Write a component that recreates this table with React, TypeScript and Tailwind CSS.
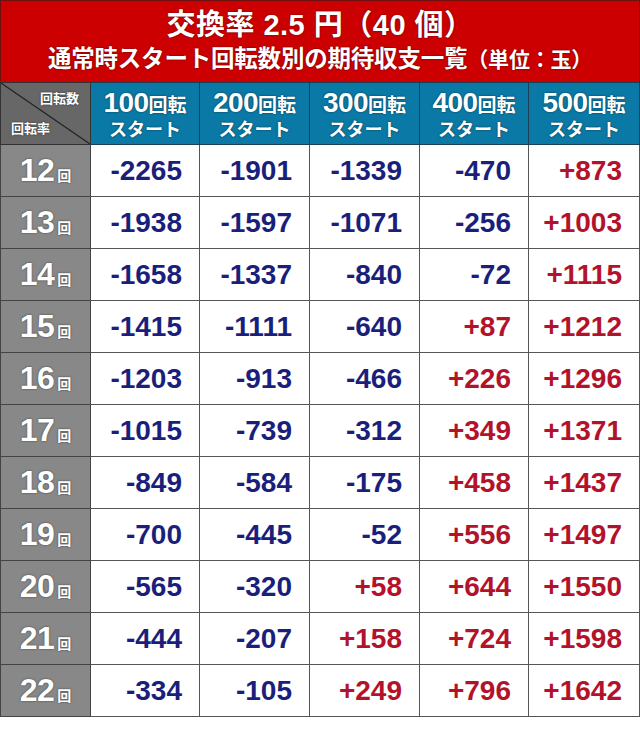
import React from 'react';

const cols = [100, 200, 300, 400, 500];

const rows: { rate: number; vals: number[] }[] = [
  { rate: 12, vals: [-2265, -1901, -1339, -470, 873] },
  { rate: 13, vals: [-1938, -1597, -1071, -256, 1003] },
  { rate: 14, vals: [-1658, -1337, -840, -72, 1115] },
  { rate: 15, vals: [-1415, -1111, -640, 87, 1212] },
  { rate: 16, vals: [-1203, -913, -466, 226, 1296] },
  { rate: 17, vals: [-1015, -739, -312, 349, 1371] },
  { rate: 18, vals: [-849, -584, -175, 458, 1437] },
  { rate: 19, vals: [-700, -445, -52, 556, 1497] },
  { rate: 20, vals: [-565, -320, 58, 644, 1550] },
  { rate: 21, vals: [-444, -207, 158, 724, 1598] },
  { rate: 22, vals: [-334, -105, 249, 796, 1642] },
];

const font = { fontFamily: '"Liberation Sans", "Noto Sans CJK JP", sans-serif' };
const outline = '[text-shadow:0_0_2px_rgba(0,0,0,0.6)]';

export default function App() {
  return (
    <div className="w-[640px] h-[731px] bg-white font-bold" style={font}>
      {/* title */}
      <div className="h-[82px] bg-[#cc0000] border-t border-x border-[#6e1010] flex flex-col items-center text-white [text-shadow:0_0_2px_rgba(0,0,0,0.6)]">
        <div className="text-[29px] leading-none mt-[10px] tracking-[0.5px]">
          交換率 2.5 円（40 個）
        </div>
        <div className="text-[23.5px] leading-none mt-[8px] tracking-[-0.2px]">
          通常時スタート回転数別の期待収支一覧<span className="text-[21px]">（単位：玉）</span>
        </div>
      </div>

      <div className="grid grid-cols-[91px_109px_110px_110px_109px_111px]">
        {/* corner */}
        <div className="relative h-[63px] bg-[#676767] border-y border-l border-r border-[#333] text-white text-[13px] leading-none">
          <svg className="absolute inset-0" width="100%" height="100%" preserveAspectRatio="none" viewBox="0 0 100 100">
            <line x1="0" y1="0" x2="100" y2="100" stroke="#222" strokeWidth="1.2" vectorEffect="non-scaling-stroke" />
          </svg>
          <div className={`absolute right-[11px] top-[9px] ${outline}`}>回転数</div>
          <div className={`absolute left-[10px] bottom-[9px] ${outline}`}>回転率</div>
        </div>
        {cols.map((c) => (
          <div
            key={c}
            className={`h-[63px] bg-[#0a79a5] border-y border-r border-[#1b3f55] flex flex-col items-center justify-center text-white leading-none ${outline}`}
          >
            <div className="flex items-baseline">
              <span className="text-[28px] tracking-[-0.5px]">{c}</span>
              <span className="text-[19px]">回転</span>
            </div>
            <div className="text-[18px] mt-[4px]">スタート</div>
          </div>
        ))}

        {rows.map((r) => (
          <React.Fragment key={r.rate}>
            <div
              className={`h-[52px] bg-[#888888] border-l border-r border-b border-[#444] flex items-baseline justify-center pt-[9px] text-white ${outline}`}
            >
              <span className="text-[32px] leading-none tracking-[-0.5px]">{r.rate}</span>
              <span className="text-[14px] leading-none ml-[3px]">回</span>
            </div>
            {r.vals.map((v, i) => (
              <div
                key={i}
                className={`h-[52px] border-r border-b border-[#555] flex items-center justify-end pr-[17px] text-[28px] leading-none ${
                  v < 0 ? 'text-[#1a1f7c]' : 'text-[#b3122b]'
                }`}
              >
                {v > 0 ? `+${v}` : `${v}`}
              </div>
            ))}
          </React.Fragment>
        ))}
      </div>
    </div>
  );
}
